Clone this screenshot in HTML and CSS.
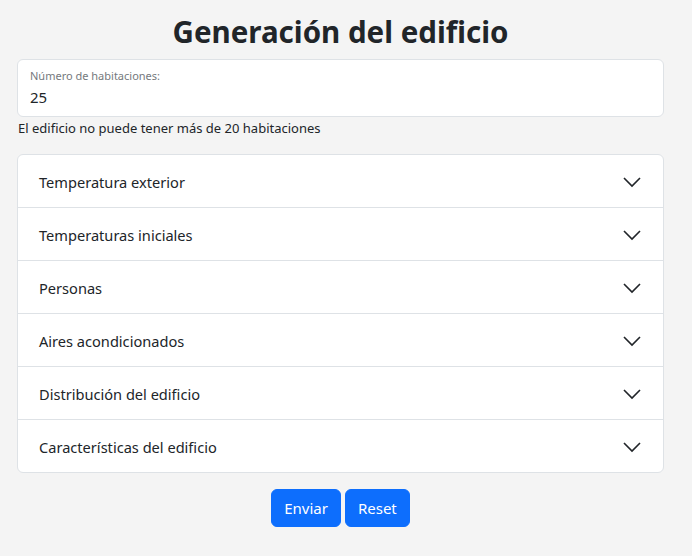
FILE: index.html
```html
<!DOCTYPE html>
<html lang="es">
<head>
<meta charset="utf-8">
<title>Generación del edificio</title>
<link rel="stylesheet" href="styles.css">
</head>
<body>
<main class="page">
  <h1 class="title">Generación del edificio</h1>
  <div class="floating">
    <label class="floating-label" for="hab">Número de habitaciones:</label>
    <input class="floating-input" id="hab" type="text" value="25">
  </div>
  <div class="help">El edificio no puede tener más de 20 habitaciones</div>
  <div class="accordion">
    <div class="acc-item"><span>Temperatura exterior</span><svg class="chev" viewBox="0 0 16 16"><path d="M1.6 4.8 8 11.2l6.4-6.4"/></svg></div>
    <div class="acc-item"><span>Temperaturas iniciales</span><svg class="chev" viewBox="0 0 16 16"><path d="M1.6 4.8 8 11.2l6.4-6.4"/></svg></div>
    <div class="acc-item"><span>Personas</span><svg class="chev" viewBox="0 0 16 16"><path d="M1.6 4.8 8 11.2l6.4-6.4"/></svg></div>
    <div class="acc-item"><span>Aires acondicionados</span><svg class="chev" viewBox="0 0 16 16"><path d="M1.6 4.8 8 11.2l6.4-6.4"/></svg></div>
    <div class="acc-item"><span>Distribución del edificio</span><svg class="chev" viewBox="0 0 16 16"><path d="M1.6 4.8 8 11.2l6.4-6.4"/></svg></div>
    <div class="acc-item"><span>Características del edificio</span><svg class="chev" viewBox="0 0 16 16"><path d="M1.6 4.8 8 11.2l6.4-6.4"/></svg></div>
  </div>
  <div class="actions">
    <button class="btn" type="button">Enviar</button>
    <button class="btn" type="button">Reset</button>
  </div>
</main>
</body>
</html>
```
FILE: styles.css
```css
* { box-sizing: border-box; }
html, body { margin: 0; padding: 0; }
body {
  background: #f4f4f4;
  color: #212529;
  font-family: "Noto Sans", "Open Sans", sans-serif;
  font-size: 15px;
}
.page {
  width: 647px;
  margin: 0 0 0 17px;
  padding-top: 12px;
  display: flex;
  flex-direction: column;
}
.title {
  margin: 0 0 8px;
  text-align: center;
  font-size: 29.5px;
  line-height: 39px;
  font-weight: 700;
  color: #212529;
}
.floating {
  background: #fff;
  border: 1px solid #dee2e6;
  border-radius: 6px;
  height: 58px;
  display: flex;
  flex-direction: column;
  padding: 9px 12px 0;
}
.floating-label {
  font-size: 11px;
  line-height: 14px;
  color: #75797d;
}
.floating-input {
  border: 0;
  outline: 0;
  padding: 0;
  margin-top: 4px;
  font: inherit;
  font-size: 15px;
  line-height: 20px;
  color: #212529;
  background: transparent;
}
.help {
  margin-top: 2px;
  font-size: 13px;
  line-height: 18px;
  padding-left: 1px;
}
.accordion {
  margin-top: 17px;
  background: #fff;
  border: 1px solid #dee2e6;
  border-radius: 6px;
  display: flex;
  flex-direction: column;
}
.acc-item {
  height: 53px;
  display: flex;
  align-items: center;
  justify-content: space-between;
  padding: 2px 21px 0 21px;
  font-size: 14.6px;
  border-top: 1px solid #dee2e6;
}
.acc-item:first-child { border-top: 0; height: 52px; }
.chev {
  width: 20px;
  height: 20px;
  fill: none;
  stroke: #212529;
  stroke-width: 1.3;
}
.actions {
  margin-top: 16px;
  display: flex;
  justify-content: center;
  gap: 4px;
}
.btn {
  background: #0d6efd;
  color: #fff;
  border: 1px solid #0d6efd;
  border-radius: 6px;
  height: 38px;
  padding: 0 12px;
  font: inherit;
  font-size: 15px;
}
```
